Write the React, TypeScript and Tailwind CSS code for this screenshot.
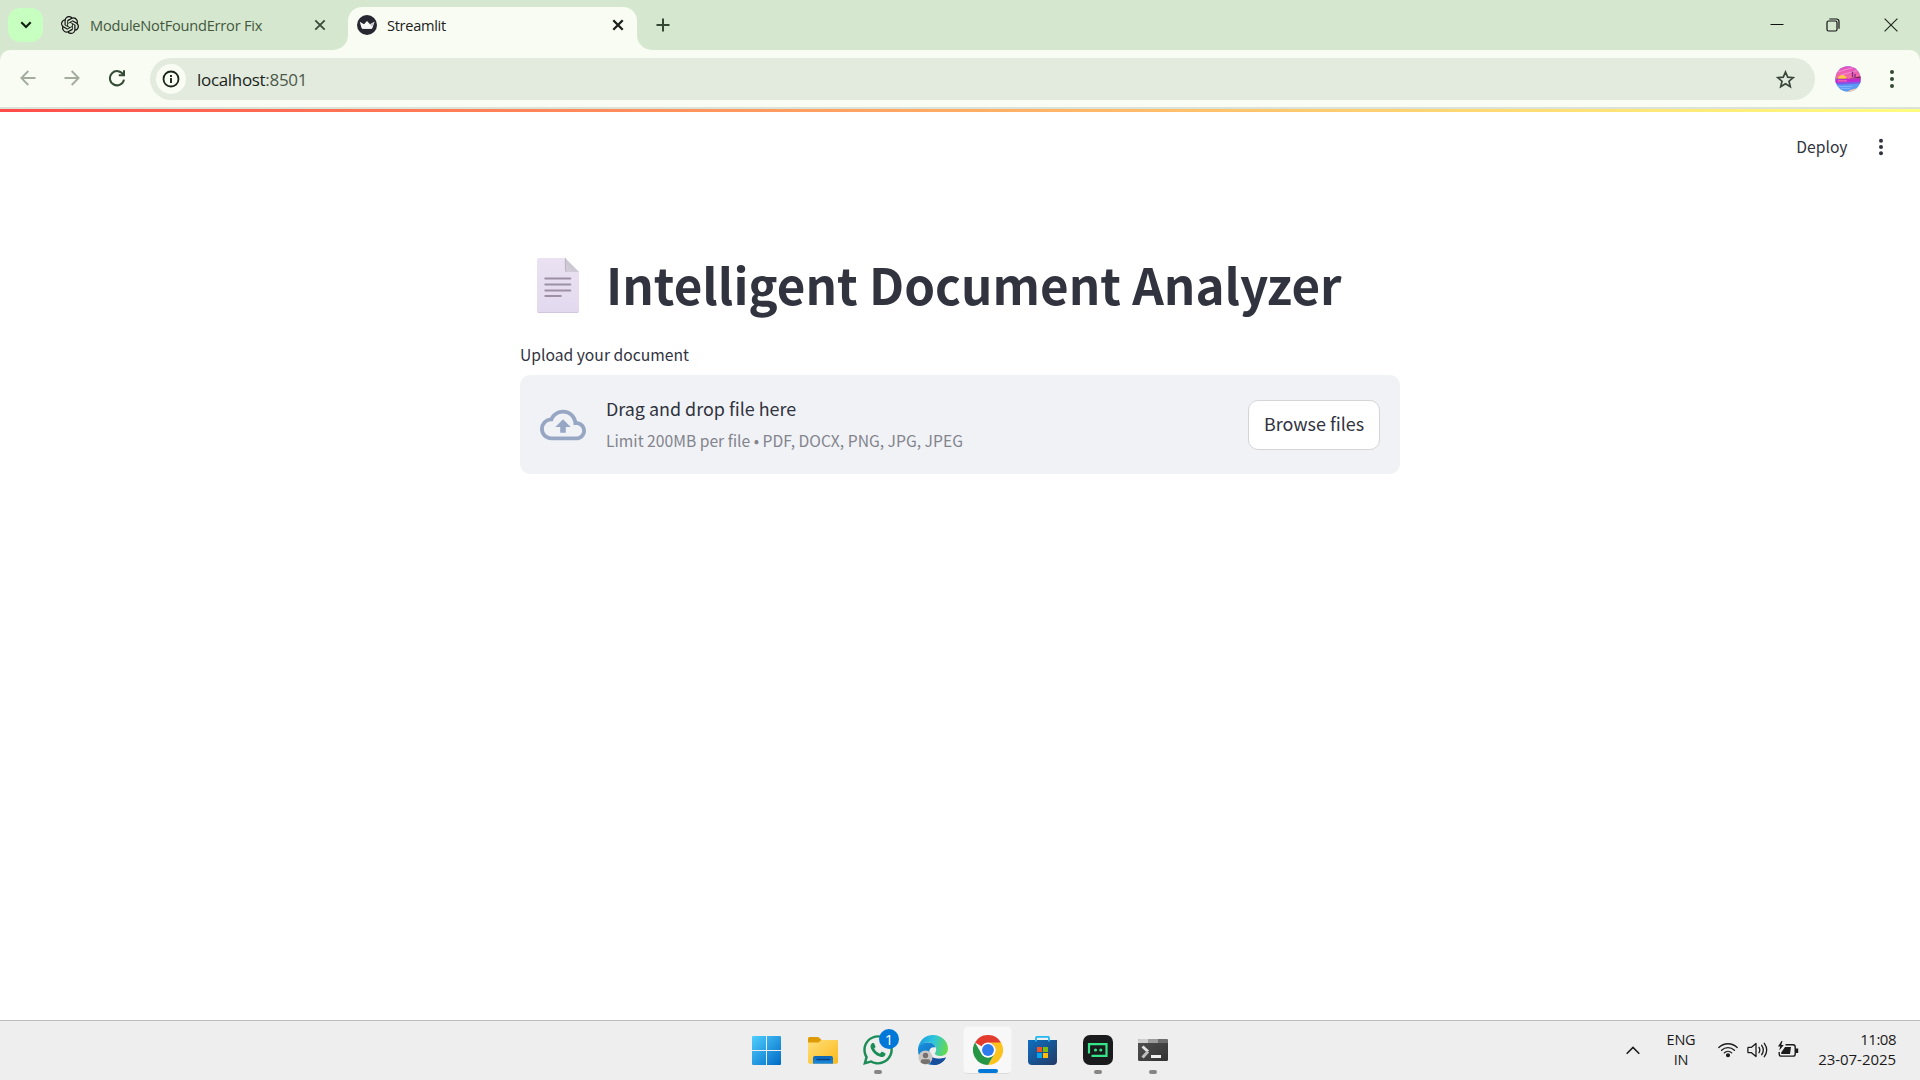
import React from 'react';
import { SiOpenai } from 'react-icons/si';
import { FaWhatsapp } from 'react-icons/fa';

const cjk = 'font-["Noto_Sans_CJK_JP",sans-serif]';
const ui = 'font-["Open_Sans",sans-serif]';

function CloseIcon({ color, w = 2 }: { color: string; w?: number }) {
  return (
    <svg width="12" height="12" viewBox="0 0 12 12" stroke={color} strokeWidth={w} fill="none">
      <path d="M1.3 1.3 10.7 10.7M10.7 1.3 1.3 10.7" />
    </svg>
  );
}

function TabStrip() {
  return (
    <div className="flex h-[50px] w-full bg-[#d5e7ce]">
      <div className="mt-2 ml-2 flex h-[34px] w-[35px] items-center justify-center rounded-[12px] bg-[#c7ffc0]">
        <svg width="12" height="8" viewBox="0 0 12 8" fill="none" stroke="#102010" strokeWidth="2.2">
          <path d="M1.3 1.3 6 6l4.7-4.7" />
        </svg>
      </div>
      <div className="flex h-[50px] w-[305px] items-center pl-[18px]">
        <SiOpenai size={18} color="#111" />
        <span className="ml-[11px] w-[224px] text-[14.6px] leading-5 tracking-[-0.22px] text-[#43573f]">ModuleNotFoundError Fix</span>
        <CloseIcon color="#3a4a38" w={1.8} />
      </div>
      <div className="relative mt-[7px] flex h-[43px] w-[289px] items-center rounded-t-[14px] bg-[#f8fcf3] pb-[7px] pl-[9px]">
        <svg className="absolute bottom-0 -left-[15px]" width="15" height="15" viewBox="0 0 15 15"><path d="M15 0v15H0A15 15 0 0 0 15 0Z" fill="#f8fcf3" /></svg>
        <svg className="absolute -right-[15px] bottom-0" width="15" height="15" viewBox="0 0 15 15"><path d="M0 0v15h15A15 15 0 0 1 0 0Z" fill="#f8fcf3" /></svg>
        <svg width="20" height="20" viewBox="0 0 20 20">
          <circle cx="10" cy="10" r="10" fill="#262730" />
          <path d="M2.7 6.8 7 9.2 10 6l3 3.2 4.5-2.4-2 6c-.2.6-.5.9-1.2.9H5.9c-.7 0-1-.3-1.2-.9Z" fill="#fafafa" />
          <path d="m10 6 3 3.2 4.5-2.4-2.5 5Z" fill="#c4c4c8" />
          <path d="M3.6 9.5 15 12.8l-.6.9H5.9c-.7 0-1-.3-1.2-.9Z" fill="#f4f4f4" />
        </svg>
        <span className="ml-[10px] w-[225px] text-[14.6px] leading-5 tracking-[-0.3px] text-[#1c221b]">Streamlit</span>
        <CloseIcon color="#1b1f1a" w={2.3} />
      </div>
      <div className="flex h-[50px] flex-1 items-center pl-[19px]">
        <svg width="14" height="14" viewBox="0 0 14 14" stroke="#334732" strokeWidth="2"><path d="M7 .5v13M.5 7h13" /></svg>
      </div>
      <div className="flex h-[49px] items-center pr-[22px]">
        <svg className="mr-[42px]" width="14" height="14" viewBox="0 0 14 14" stroke="#111" strokeWidth="1"><path d="M0.5 6.5h13" /></svg>
        <svg className="mr-[44px]" width="14" height="14" viewBox="0 0 14 14" fill="none" stroke="#111" strokeWidth="1.2">
          <rect x="1" y="3" width="10" height="10" rx="1.5" />
          <path d="M3.3 1h7.2a2.5 2.5 0 0 1 2.5 2.5v7.2" />
        </svg>
        <svg width="14" height="14" viewBox="0 0 14 14" stroke="#222c21" strokeWidth="1.2"><path d="m.6.6 12.8 12.8M13.4.6.6 13.4" /></svg>
      </div>
    </div>
  );
}

function Arrow({ flip }: { flip?: boolean }) {
  return (
    <svg className={flip ? 'rotate-180' : ''} width="16" height="16" viewBox="0 0 16 16" fill="none" stroke="#a4aca0" strokeWidth="1.9">
      <path d="M15.5 8H2M8.3 1 1.4 8l6.900 7" />
    </svg>
  );
}

function Avatar() {
  return (
    <svg width="26" height="26" viewBox="0 0 26 26">
      <defs>
        <clipPath id="av"><circle cx="13" cy="13" r="12.7" /></clipPath>
        <linearGradient id="sky" x1="0" y1="0" x2="0" y2="1"><stop offset="0" stopColor="#e04fc4" /><stop offset="1" stopColor="#f9729b" /></linearGradient>
      </defs>
      <g clipPath="url(#av)">
        <rect width="26" height="26" fill="#5b9bf5" />
        <rect width="26" height="13" fill="url(#sky)" />
        <path d="M3 6 20 1M6 9 24 4" stroke="#f58ad8" strokeWidth="1.2" />
        <path d="M3 13a4.3 4 0 0 1 8.6 0Z" fill="#ffc94b" />
        <path d="M0 12.800h12l14-2.600v2.300H0Z" fill="#7a2060" />
        <path d="M17.500 5.500v5.500M20 8v3" stroke="#7d2a8e" strokeWidth="1.300" />
        <path d="M0 13.300 26 12.500v4L0 17Z" fill="#c32bd0" />
        <path d="M3 14.800h9" stroke="#f76aa8" strokeWidth="1.300" />
        <path d="M0 17 26 15.500v2L4 18.800Z" fill="#7a5ee8" />
        <path d="M2 20.500h15M6 22.500h9" stroke="#7db4fb" strokeWidth="1" />
        <path d="M12 26q3-3 12-4l-4 4Z" fill="#fbc7a0" />
      </g>
    </svg>
  );
}

function Dots({ color, gap }: { color: string; gap: number }) {
  return (
    <svg width="6" height="20" viewBox="0 0 6 20" fill={color}>
      <circle cx="3" cy={10 - gap} r="2" /><circle cx="3" cy="10" r="2" /><circle cx="3" cy={10 + gap} r="2" />
    </svg>
  );
}

function Toolbar() {
  return (
    <div className="bg-[#d5e7ce]">
      <div className="flex h-[57px] items-center rounded-t-[10px] bg-[#f8fcf3] pb-[1px] pl-[19.5px]">
        <Arrow />
        <div className="w-[28.5px]" />
        <Arrow flip />
        <svg className="ml-[28px]" width="18" height="18" viewBox="0 0 18 18" fill="none" stroke="#354a35" strokeWidth="2">
          <path d="M15.300 5.900A7.100 7.100 0 1 0 16 10.600" />
          <path d="M10.800 6.200H16V1.200" />
        </svg>
        <div className="mt-[2px] ml-[24px] flex h-[42px] w-[1665px] items-center rounded-full bg-[#e3ebdf] pl-[6px]">
          <div className="flex h-[30px] w-[30px] items-center justify-center rounded-full bg-[#f8fcf3]">
            <svg width="18" height="18" viewBox="0 0 18 18" fill="none" stroke="#1b241b" strokeWidth="1.800">
              <circle cx="9" cy="9" r="7.500" /><path d="M9 8v5M9 5v2" strokeWidth="1.900" />
            </svg>
          </div>
          <span className="ml-[11px] flex-1 pt-[2px] text-[17px] leading-6 tracking-[-0.32px] text-[#1b1f1a]">localhost<span className="text-[#4c5a4a]">:8501</span></span>
          <svg className="mr-5" width="19" height="19" viewBox="0 0 19 19" fill="none" stroke="#3a4639" strokeWidth="1.700">
            <path d="m9.500 2 2.200 5.100 5.500.5-4.200 3.600 1.300 5.500-4.800-2.900-4.800 2.900L6 11.200 1.800 7.600l5.500-.5Z" />
          </svg>
        </div>
        <div className="mt-px ml-[20px]"><Avatar /></div>
        <div className="mt-px ml-[28px]"><Dots color="#354a35" gap={7} /></div>
      </div>
      <div className="h-[2px] bg-[#dbe3d8]" />
    </div>
  );
}

function DocumentIcon() {
  return (
    <svg width="42" height="55" viewBox="0 0 42 55">
      <defs>
        <linearGradient id="pg" x1="0" y1="0" x2="0" y2="1"><stop offset="0" stopColor="#eae2f2" /><stop offset="1" stopColor="#e3d9ef" /></linearGradient>
        <linearGradient id="fold" x1="0" y1="1" x2="1" y2="0"><stop offset="0" stopColor="#d5d0da" /><stop offset="1" stopColor="#c3bdc9" /></linearGradient>
      </defs>
      <path d="M2 0h26l14 14v39a2 2 0 0 1-2 2H2a2 2 0 0 1-2-2V2a2 2 0 0 1 2-2Z" fill="url(#pg)" />
      <path d="M.5 53.500q.3 1 1.500 1h38q1.300 0 1.500-1" stroke="#d2c6df" fill="none" />
      <path d="M28 0l14 14H30a2 2 0 0 1-2-2Z" fill="url(#fold)" />
      <path d="M28.400 0v12q0 1.600 1.600 1.600" stroke="#b4adbb" strokeWidth=".8" fill="none" />
      <path d="M8.300 20.500h25M8.300 26.500h25M8.300 32.500h25M8.300 38h15.500" stroke="#9b90a4" strokeWidth="2" strokeLinecap="round" />
    </svg>
  );
}

function Page() {
  return (
    <main className={cjk + ' flex h-[911px] flex-col bg-white text-[#31333f]'}>
      <div className="h-[3px] shrink-0 bg-linear-to-r from-[#ff4b4b] to-[#fffd80]" />
      <div className="flex h-[69px] shrink-0 items-center justify-end pr-[36.5px]">
        <span className="mr-[30px] text-[15.68px] leading-6">Deploy</span>
        <Dots color="#31333f" gap={6.3} />
      </div>
      <div className="mx-auto flex w-[880px] flex-col">
        <div className="mt-[66px] flex h-[76px] items-center pl-[17px]">
          <DocumentIcon />
          <h1 className="ml-[27px] pb-[2px] text-[49.3px] leading-[66px] font-bold whitespace-nowrap">Intelligent Document Analyzer</h1>
        </div>
        <p className="mt-[20px] h-[32px] text-[15.68px] leading-[24px]">Upload your document</p>
        <section className="flex h-[99px] items-center rounded-[10px] bg-[#f0f2f6] px-5">
          <svg width="46" height="46" viewBox="0 0 24 24" fill="#97a6c3">
            <path d="M19.350 10.040A7.490 7.490 0 0 0 12 4C9.110 4 6.600 5.640 5.350 8.040A5.994 5.994 0 0 0 0 14c0 3.310 2.690 6 6 6h13c2.760 0 5-2.240 5-5 0-2.640-2.050-4.780-4.650-4.960zM19 18H6c-2.210 0-4-1.790-4-4s1.790-4 4-4h.710C7.370 7.690 9.480 6 12 6c3.040 0 5.500 2.460 5.500 5.500v.5H19c1.660 0 3 1.340 3 3s-1.340 3-3 3zM8 13h2.550v3h2.900v-3H16l-4-4z" />
          </svg>
          <div className="ml-5 flex-1">
            <p className="text-[17.92px] leading-[32px]">Drag and drop file here</p>
            <p className="pt-px text-[15.68px] leading-[32px] text-[#83848c]">Limit 200MB per file • PDF, DOCX, PNG, JPG, JPEG</p>
          </div>
          <button className="h-[50px] w-[132px] rounded-[10px] border border-[#d4d4d9] bg-white pb-[3px] text-[17.92px] whitespace-nowrap">Browse files</button>
        </section>
      </div>
    </main>
  );
}

function Slot({ children, mark }: { children: React.ReactNode; mark?: boolean }) {
  return (
    <div className="relative flex h-[48px] w-[55px] items-center justify-center">
      {children}
      {mark && <div className="absolute bottom-0 left-[24px] h-[4px] w-[8px] rounded-full bg-[#868686]" />}
    </div>
  );
}

function WindowsIcon() {
  return (
    <svg width="29" height="29" viewBox="0 0 29 29">
      <defs><linearGradient id="win" gradientUnits="userSpaceOnUse" x1="0" y1="0" x2="29" y2="29"><stop offset="0" stopColor="#4fd0ff" /><stop offset="1" stopColor="#0069c6" /></linearGradient></defs>
      <path d="M1 0h13v14H0V1a1 1 0 0 1 1-1ZM15 0h13a1 1 0 0 1 1 1v13H15ZM0 15h14v14H1a1 1 0 0 1-1-1ZM15 15h14v13a1 1 0 0 1-1 1H15Z" fill="url(#win)" />
    </svg>
  );
}

function FolderIcon() {
  return (
    <svg width="30" height="27" viewBox="0 0 30 27">
      <defs>
        <linearGradient id="fo" x1="0" y1="0" x2="1" y2="1"><stop offset="0" stopColor="#ffdf7a" /><stop offset="1" stopColor="#fbb919" /></linearGradient>
        <linearGradient id="fb" x1="0" y1="0" x2="0" y2="1"><stop offset="0" stopColor="#0e64b5" /><stop offset="1" stopColor="#1b8be0" /></linearGradient>
      </defs>
      <path d="M0 1.500Q0 0 1.500 0h8q1 0 1.800.8L13.500 3H28q2 0 2 2v5H0Z" fill="#dd9c07" />
      <path d="M0 5.500h10.500L13.500 3H28.500Q30 3 30 4.500V25q0 1.700-1.700 1.700H1.700Q0 26.700 0 25Z" fill="url(#fo)" />
      <path d="M5 26.700V21q0-2 2-2h16q2 0 2 2v5.700Z" fill="url(#fb)" />
      <path d="M9 22.500h12.500" stroke="#08437f" strokeWidth="1.300" strokeLinecap="round" />
    </svg>
  );
}

function EdgeIcon() {
  return (
    <svg width="30" height="30" viewBox="0 0 30 30">
      <defs>
        <linearGradient id="e1" x1="0" y1=".3" x2="1" y2=".5"><stop offset="0" stopColor="#1a9be0" /><stop offset=".5" stopColor="#2fc5dc" /><stop offset="1" stopColor="#66da4b" /></linearGradient>
        <linearGradient id="e2" x1="0" y1="0" x2="1" y2="1"><stop offset="0" stopColor="#1a93df" /><stop offset="1" stopColor="#0d5cae" /></linearGradient>
      </defs>
      <path d="M0 15C0 10 4 7.200 9.500 7.200c5 0 8 2.800 8 5.300-4.500-1.500-7 2-6 6 1.200 5 7.500 6.900 16.400 3.900C25.500 27 21 30 15.500 30 7 30 0 24 0 15Z" fill="url(#e2)" />
      <path d="M11.400 18c1.200 5 7.500 7.400 16.500 4.400C25.500 27 21 30 15.500 30 11 28 9.500 22 11.400 18Z" fill="#174f9c" />
      <path d="M0 14.500C.5 6 7 0 15 0c9 0 15 6.500 15 13.500 0 5-3.500 7.500-8 7.500-3.500 0-5.200-1.300-5.200-2.400 0-1 1.400-1.600 1.400-4.200C18.200 10.500 14.500 7.200 9.500 7.200 4 7.200.5 11 0 14.500Z" fill="url(#e1)" />
      <circle cx="7.500" cy="22.500" r="7" fill="#cac8c6" />
      <circle cx="7.500" cy="20.500" r="2.700" fill="#77716d" />
      <path d="M2.800 27.500v-1.300q0-2 2-2h5.400q2 0 2 2v1.300a7 7 0 0 1-9.400 0Z" fill="#77716d" />
    </svg>
  );
}

function ChromeIcon() {
  return (
    <svg width="30" height="30" viewBox="0 0 48 48">
      <path d="M24 24 3.200 12A24 24 0 0 1 44.800 12Z" fill="#e33b2e" />
      <path d="M24 12h20.800A24 24 0 0 1 24 48L34.400 30A12 12 0 0 0 24 12Z" fill="#fcc31e" />
      <path d="M34.400 30 24 48A24 24 0 0 1 3.200 12l10.400 18A12 12 0 0 0 34.400 30Z" fill="#269644" />
      <circle cx="24" cy="24" r="12" fill="#fff" />
      <circle cx="24" cy="24" r="9.500" fill="#2f7bed" />
    </svg>
  );
}

function StoreIcon() {
  return (
    <svg width="29" height="29" viewBox="0 0 29 29">
      <defs><linearGradient id="st" x1="0" y1="0" x2="1" y2="1"><stop offset="0" stopColor="#0e6fc0" /><stop offset="1" stopColor="#233a66" /></linearGradient></defs>
      <path d="M0 4h29v21a4 4 0 0 1-4 4H4a4 4 0 0 1-4-4Z" fill="url(#st)" />
      <path d="M8 5.500V2q0-1.200 1.200-1.200h10.600Q21 .8 21 2v3.500" fill="none" stroke="#24b8f2" strokeWidth="1.800" />
      <path d="M9 11h5v5H9Z" fill="#f35325" /><path d="M15 11h5v5h-5Z" fill="#81bc06" />
      <path d="M9 17h5v5H9Z" fill="#05a6f0" /><path d="M15 17h5v5h-5Z" fill="#ffba08" />
    </svg>
  );
}

function RobotIcon() {
  return (
    <svg width="30" height="30" viewBox="0 0 30 30">
      <rect width="30" height="30" rx="7" fill="#191b1c" />
      <path d="M6 18.500V9.200h17.500v11.600H8.500" fill="none" stroke="#35e588" strokeWidth="2.200" />
      <circle cx="12.500" cy="15" r="1.600" fill="#35e588" /><circle cx="17.800" cy="15" r="1.600" fill="#35e588" />
    </svg>
  );
}

function TerminalIcon() {
  return (
    <svg width="30" height="22" viewBox="0 0 30 22">
      <defs><linearGradient id="tm" x1="0" y1="0" x2="1" y2="1"><stop offset="0" stopColor="#525252" /><stop offset="1" stopColor="#323232" /></linearGradient></defs>
      <rect width="30" height="22" rx="1.500" fill="url(#tm)" />
      <path d="M1.500 0H10v4H0V1.500Q0 0 1.500 0Z" fill="#cfcfcf" /><path d="M10 0h10v4H10Z" fill="#9c9c9c" /><path d="M20 0h8.500Q30 0 30 1.500V4H20Z" fill="#6c6c6c" />
      <path d="m4.500 7.500 5.500 5" stroke="#e4e4e4" strokeWidth="3" /><path d="m10 12.500-5.500 6" stroke="#bdbdbd" strokeWidth="3" />
      <path d="M13 16h10v3H13Z" fill="#f0f0f0" />
    </svg>
  );
}

function Taskbar() {
  return (
    <footer className="flex h-[60px] border-t border-[#bdbdbd] bg-[#eeeeee] pt-[5px] text-[#1b1b1b]">
      <div className="ml-[740px] flex w-[440px]">
        <Slot><div className="mr-[2px]"><WindowsIcon /></div></Slot>
        <Slot><div className="ml-px"><FolderIcon /></div></Slot>
        <Slot mark>
          <FaWhatsapp size={34} color="#1d8d57" />
          <div className="absolute top-[3px] left-[29px] flex h-5 w-5 items-center justify-center rounded-full bg-[#0078d7] text-[15px] leading-none text-white">1</div>
        </Slot>
        <Slot><EdgeIcon /></Slot>
        <Slot>
          <div className="absolute inset-y-0 left-[3px] flex w-[49px] items-center justify-center rounded-[5px] border border-[#f2f2f2] border-b-[#dcdcdc] bg-[#f8f8f8]">
            <ChromeIcon />
            <div className="absolute bottom-0 left-[14px] h-[4px] w-[20px] rounded-full bg-[#0078d7]" />
          </div>
        </Slot>
        <Slot><StoreIcon /></Slot>
        <Slot mark><div className="ml-px"><RobotIcon /></div></Slot>
        <Slot mark><div className="ml-px"><TerminalIcon /></div></Slot>
      </div>
      <div className="flex h-[48px] flex-1 items-center justify-end pr-[24px] text-[15px]">
        <svg width="14" height="9" viewBox="0 0 14 9" fill="none" stroke="#1b1b1b" strokeWidth="1.600"><path d="M.7 7.800 7 1.500l6.300 6.300" /></svg>
        <div className="ml-[20px] w-[42px] text-center text-[14.5px] leading-5 tracking-[-0.2px]">ENG<br />IN</div>
        <svg className="ml-[16px]" width="20" height="16" viewBox="0 0 20 16" fill="none" stroke="#1b1b1b" strokeWidth="1.300" strokeLinecap="round">
          <path d="M.8 5.500a13.200 13.200 0 0 1 18.400 0M3.600 8.200a9.200 9.200 0 0 1 12.800 0M6.300 10.900a5.400 5.400 0 0 1 7.400 0" /><circle cx="10" cy="13.300" r="1.400" fill="#1b1b1b" />
        </svg>
        <svg className="ml-[9px]" width="22" height="18" viewBox="0 0 22 18" fill="none" stroke="#1b1b1b" strokeWidth="1.300" strokeLinecap="round" strokeLinejoin="round">
          <path d="M1.500 6.300h3L9 2.500v13l-4.500-3.800h-3q-.6 0-.6-.6V6.900q0-.6.600-.6Z" />
          <path d="M12 6.300q1.600 2.700 0 5.400M14.700 4.300q3.200 4.700 0 9.400M17.300 2.300q4.800 6.700 0 13.400" />
        </svg>
        <svg className="ml-[8px]" width="22" height="18" viewBox="0 0 22 18" fill="none" stroke="#1b1b1b" strokeWidth="1.400">
          <path d="M8.500 3.700H16q2.200 0 2.200 2.200v7q0 2.200-2.200 2.200H4.400q-2.200 0-2.200-2.200v-2" /><path d="M19 8.300h1.500v3H19Z" fill="#1b1b1b" />
          <path d="M8 6h6l-1 7H4.200v-1.500Z" fill="#1b1b1b" stroke="none" /><path d="M4.500 0 1 5.500h2.200L2.200 9.500 6.800 4H4.300L5.500 0Z" fill="#1b1b1b" stroke="none" />
        </svg>
        <div className="w-[97px] pb-[2px] text-right text-[15px] leading-5">
          <div className="tracking-[-0.5px]">11:08</div><div className="tracking-[-0.05px]">23-07-2025</div>
        </div>
      </div>
    </footer>
  );
}

export default function App() {
  return (
    <div className={ui + ' flex h-[1080px] w-[1920px] flex-col overflow-hidden'}>
      <TabStrip />
      <Toolbar />
      <Page />
      <Taskbar />
    </div>
  );
}
